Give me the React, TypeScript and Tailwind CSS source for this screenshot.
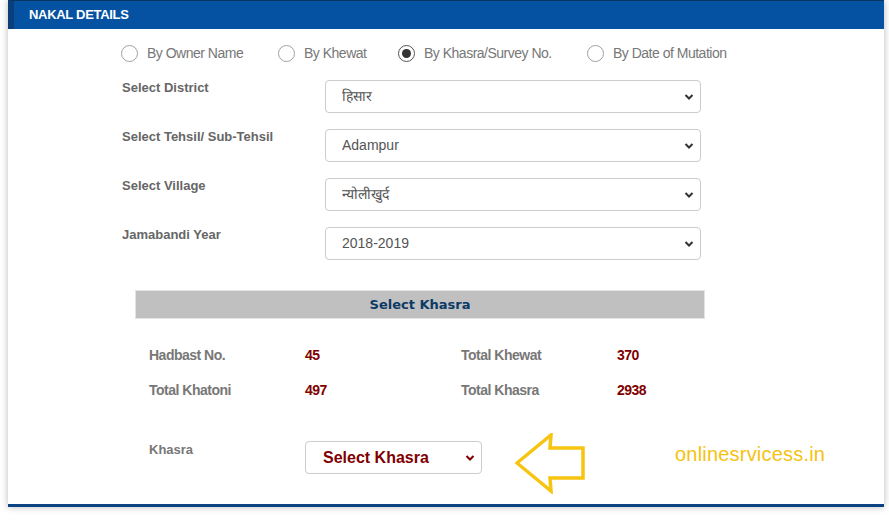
const font = { fontFamily: '"Liberation Sans", Arial, sans-serif' }

const radios = [
  { label: 'By Owner Name', w: 'w-[157px]', checked: false },
  { label: 'By Khewat', w: 'w-[120px]', checked: false },
  { label: 'By Khasra/Survey No.', w: 'w-[189px]', checked: true },
  { label: 'By Date of Mutation', w: 'w-[160px]', checked: false },
]

const fields = [
  { label: 'Select District', value: 'हिसार' },
  { label: 'Select Tehsil/ Sub-Tehsil', value: 'Adampur' },
  { label: 'Select Village', value: 'न्योलीखुर्द' },
  { label: 'Jamabandi Year', value: '2018-2019' },
]

function Chevron({ color }: { color: string }) {
  return (
    <svg width="10" height="7" viewBox="0 0 10 7" className="pointer-events-none absolute right-[7px] top-1/2 -translate-y-1/2">
      <path d="M1.5 1.5 L5 5 L8.5 1.5" fill="none" stroke={color} strokeWidth="2" />
    </svg>
  )
}

function Stat({ label, value }: { label: string; value: string }) {
  return (
    <>
      <div className="w-[156px] text-[14px] font-bold leading-[20px] tracking-[-0.5px] text-[#777]">{label}</div>
      <div className="w-[156px] text-[14px] font-bold leading-[20px] tracking-[-0.5px] text-[#800000]">{value}</div>
    </>
  )
}

export default function App() {
  return (
    <div className="min-h-[523px] bg-white" style={font}>
      <div className="ml-2 w-[876px] border-b-[3px] border-[#0b4383] bg-white shadow-[0_0_7px_rgba(0,0,0,0.28)]">
        {/* Header */}
        <div className="flex h-[29px] items-center border-t border-l-[6px] border-t-[#0a3560] border-l-[#0a3f7a] bg-[#0652a2] pl-[15px]">
          <span className="text-[13px] font-bold tracking-[-0.3px] text-white">NAKAL DETAILS</span>
        </div>

        <div className="h-[475px] pt-[15px]">
          {/* Search type */}
          <div className="flex h-[18px] items-center pl-[113px]">
            {radios.map((r) => (
              <label key={r.label} className={`flex items-center ${r.w}`}>
                <span
                  className={`flex h-[17px] w-[17px] items-center justify-center rounded-full border bg-white ${
                    r.checked ? 'border-[#555]' : 'border-[#a0a0a0]'
                  }`}
                >
                  {r.checked && <span className="h-[9px] w-[9px] rounded-full bg-[#333]" />}
                </span>
                <span className="ml-[9px] text-[14px] leading-[18px] tracking-[-0.5px] text-[#777]">{r.label}</span>
              </label>
            ))}
          </div>

          {/* Selection fields */}
          <div className="mt-[18px] flex flex-col gap-[16px] pl-[114px]">
            {fields.map((f) => (
              <div key={f.label} className="flex items-start">
                <div className="w-[203px] text-[13px] font-bold leading-[16px] text-[#666]">{f.label}</div>
                <div className="relative">
                  <select
                    className="h-[33px] w-[376px] appearance-none rounded-[4px] border border-[#ccc] bg-white pl-[16px] text-[14px] text-[#555]"
                    style={font}
                    defaultValue={f.value}
                  >
                    <option>{f.value}</option>
                  </select>
                  <Chevron color="#333" />
                </div>
              </div>
            ))}
          </div>

          {/* Select Khasra bar */}
          <div
            className="ml-[127px] mt-[30px] flex h-[29px] w-[570px] items-center justify-center border border-[#e4e4e4] bg-[#c0c0c0] text-[13px] font-bold text-[#0b3a66]"
            style={{ fontFamily: 'Verdana, "DejaVu Sans", sans-serif' }}
          >
            Select Khasra
          </div>

          {/* Stats */}
          <div className="mt-[26px] flex flex-col gap-[15px] pl-[141px]">
            <div className="flex">
              <Stat label="Hadbast No." value="45" />
              <Stat label="Total Khewat" value="370" />
            </div>
            <div className="flex">
              <Stat label="Total Khatoni" value="497" />
              <Stat label="Total Khasra" value="2938" />
            </div>
          </div>

          {/* Khasra select */}
          <div className="mt-[41px] flex items-start pl-[141px]">
            <div className="w-[156px] pt-[1px] text-[13px] font-bold leading-[16px] text-[#777]">Khasra</div>
            <div className="relative">
              <select
                className="h-[33px] w-[177px] appearance-none rounded-[4px] border border-[#ccc] bg-white pl-[17px] text-[16px] font-bold text-[#800000]"
                style={font}
                defaultValue="Select Khasra"
              >
                <option>Select Khasra</option>
              </select>
              <Chevron color="#800000" />
            </div>
            <svg width="70" height="61" viewBox="0 0 70 61" className="ml-[33px] mt-[-8px]">
              <polygon
                points="2,30 36,2 35,15 68,15 68,45 35,45 36,58"
                fill="white"
                stroke="#f8c412"
                strokeWidth="3.5"
                strokeLinejoin="miter"
              />
            </svg>
            <div className="ml-[90px] mt-[2px] text-[20px] leading-[22px] tracking-[0.2px] text-[#f5c211]">
              onlinesrvicess.in
            </div>
          </div>
        </div>
      </div>
    </div>
  )
}
